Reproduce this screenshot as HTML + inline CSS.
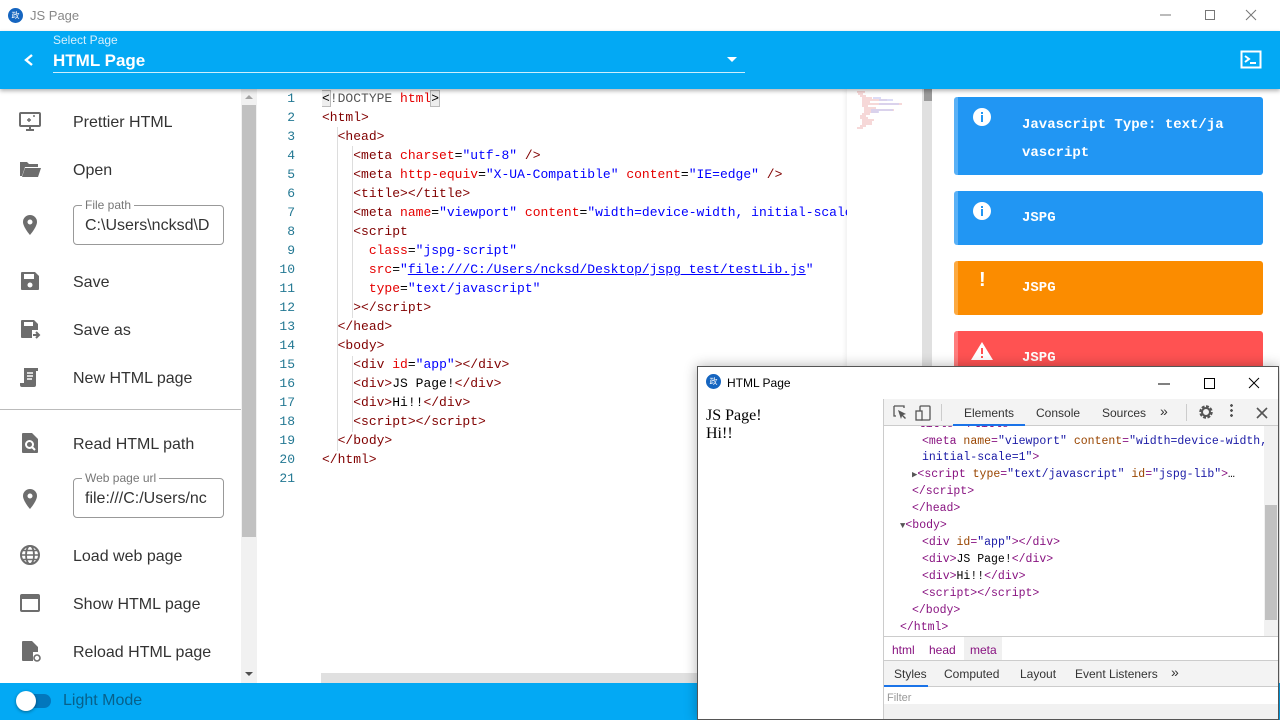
<!DOCTYPE html>
<html><head><meta charset="utf-8">
<style>
*{box-sizing:border-box;margin:0;padding:0}
body{width:1280px;height:720px;overflow:hidden;position:relative;font-family:"Liberation Sans",Arial,sans-serif;background:#fff;}
.abs{position:absolute}
.mono{font-family:"Liberation Mono","DejaVu Sans Mono",monospace}
.item{position:absolute;left:0;width:241px;height:48px}
.item .ic{position:absolute;left:18px;top:12px;width:24px;height:24px}
.item .tx{position:absolute;left:73px;top:17px;font-size:16px;color:#333}
.fld{position:absolute;left:73px;width:151px;height:40px;border:1px solid #999;border-radius:4px}
.fld .lb{position:absolute;left:8px;top:-8px;background:#fff;padding:0 3px;font-size:12px;color:#777}
.fld .v{position:absolute;left:11px;top:11px;font-size:16px;color:#333;white-space:nowrap;overflow:hidden;width:138px}
.cl{position:absolute;left:0;height:19px;font-size:13px;line-height:19px;white-space:pre;color:#000}
.ln{position:absolute;width:40px;text-align:right;left:255px;font-size:13px;line-height:19px;color:#237893}
.t{color:#800000}.a{color:#e50000}.s{color:#0000ff}
.card{position:absolute;left:954px;width:309px;border-radius:3px;color:#fff;font-family:"Liberation Mono",monospace;font-weight:bold;font-size:14px;border-left:4px solid rgba(255,255,255,.25)}
.dl{position:absolute;font-size:11.5px;line-height:17px;white-space:pre;font-family:"Liberation Mono",monospace}
.tg{color:#881280}.at{color:#994500}.av{color:#1a1aa6}
</style></head><body>
<div class="abs" style="left:0;top:0;width:1280px;height:31px;background:#fff"></div>
<div class="abs" style="left:8px;top:8px;width:15px;height:15px;border-radius:50%;background:#1565c0;color:#fff;font-size:8px;line-height:15px;text-align:center">政</div>
<div class="abs" style="left:30px;top:8px;font-size:13px;color:#888">JS Page</div>
<svg class="abs" style="left:1150px;top:5px" width="120" height="20"><line x1="10" y1="10" x2="21" y2="10" stroke="#777"/><rect x="55.5" y="5.5" width="9" height="9" fill="none" stroke="#777"/><path d="M96 5L106 15M106 5L96 15" stroke="#777"/></svg>
<div class="abs" style="left:0;top:31px;width:1280px;height:58px;background:#03a9f4;box-shadow:0 2px 4px rgba(0,0,0,.3);z-index:2">
<svg class="abs" style="left:22px;top:22px" width="14" height="14"><path d="M10 2L4 7L10 12" stroke="#fff" stroke-width="2.4" fill="none"/></svg>
<div class="abs" style="left:53px;top:2px;font-size:12px;color:#d6f0fd">Select Page</div>
<div class="abs" style="left:53px;top:20px;font-size:17px;font-weight:bold;color:#fff">HTML Page</div>
<div class="abs" style="left:53px;top:41px;width:692px;height:1px;background:#cdeefd"></div>
<svg class="abs" style="left:726px;top:25px" width="12" height="8"><path d="M1 1L6 6L11 1Z" fill="#fff"/></svg>
<svg class="abs" style="left:1240px;top:19px" width="22" height="20"><rect x="1.5" y="1.5" width="19" height="16" fill="none" stroke="#fff" stroke-width="2"/><path d="M5 6L9 9L5 12" stroke="#fff" stroke-width="2" fill="none"/><line x1="10" y1="13" x2="16" y2="13" stroke="#fff" stroke-width="2"/></svg>
</div>
<div class="abs" style="left:0;top:89px;width:241px;height:594px;background:#fff">
<div class="item" style="top:8px"><svg class="ic" viewBox="0 0 24 24"><rect x="2" y="4" width="20" height="13" rx="1" fill="none" stroke="#6d6d6d" stroke-width="2"/><path d="M8 21h8M12 17v4" stroke="#6d6d6d" stroke-width="2"/><path d="M9 11h4M11 9v4M15 7h2" stroke="#6d6d6d" stroke-width="1.4"/></svg><div class="tx">Prettier HTML</div></div>
<div class="item" style="top:56px"><svg class="ic" viewBox="0 0 24 24"><path d="M2 5h7l2 2h9v3H7L4 19H2z" fill="#6d6d6d"/><path d="M7 11h16l-3 9H4z" fill="#6d6d6d"/></svg><div class="tx">Open</div></div>
<div class="item" style="top:112px"><svg class="ic" viewBox="0 0 24 24"><path d="M12 2a7 7 0 0 0-7 7c0 5 7 13 7 13s7-8 7-13a7 7 0 0 0-7-7zm0 9.5a2.5 2.5 0 1 1 0-5 2.5 2.5 0 0 1 0 5z" fill="#6d6d6d"/></svg></div>
<div class="fld" style="top:116px"><div class="lb">File path</div><div class="v">C:\Users\ncksd\D</div></div>
<div class="item" style="top:168px"><svg class="ic" viewBox="0 0 24 24"><path d="M4 3h13l4 4v13a1 1 0 0 1-1 1H4a1 1 0 0 1-1-1V4a1 1 0 0 1 1-1z" fill="#6d6d6d"/><rect x="6" y="5" width="10" height="5" fill="#fff"/><circle cx="12" cy="16" r="2.5" fill="#fff"/></svg><div class="tx">Save</div></div>
<div class="item" style="top:216px"><svg class="ic" viewBox="0 0 24 24"><path d="M4 3h12l4 4v6h-6v8H4a1 1 0 0 1-1-1V4a1 1 0 0 1 1-1z" fill="#6d6d6d"/><rect x="6" y="5" width="9" height="4" fill="#fff"/><path d="M15 18h5M18 15l3 3-3 3" stroke="#6d6d6d" stroke-width="2" fill="none"/></svg><div class="tx">Save as</div></div>
<div class="item" style="top:264px"><svg class="ic" viewBox="0 0 24 24"><path d="M6 3h14v3h-2v14a2 2 0 0 1-2 2H4a2 2 0 0 1-2-2v-2h4z" fill="#6d6d6d"/><path d="M9 8h6M9 11h6M9 14h5" stroke="#fff" stroke-width="1.5"/></svg><div class="tx">New HTML page</div></div>
<div class="abs" style="left:0;top:320px;width:241px;height:1px;background:#bbb"></div>
<div class="item" style="top:330px"><svg class="ic" viewBox="0 0 24 24"><path d="M5 2h9l6 6v13a1 1 0 0 1-1 1H5a1 1 0 0 1-1-1V3a1 1 0 0 1 1-1z" fill="#6d6d6d"/><circle cx="11.5" cy="13.5" r="3.5" fill="none" stroke="#fff" stroke-width="2"/><path d="M14 16l3 3" stroke="#fff" stroke-width="2"/></svg><div class="tx">Read HTML path</div></div>
<div class="item" style="top:386px"><svg class="ic" viewBox="0 0 24 24"><path d="M12 2a7 7 0 0 0-7 7c0 5 7 13 7 13s7-8 7-13a7 7 0 0 0-7-7zm0 9.5a2.5 2.5 0 1 1 0-5 2.5 2.5 0 0 1 0 5z" fill="#6d6d6d"/></svg></div>
<div class="fld" style="top:389px"><div class="lb">Web page url</div><div class="v">file:///C:/Users/nc</div></div>
<div class="item" style="top:442px"><svg class="ic" viewBox="0 0 24 24"><circle cx="12" cy="12" r="9" fill="none" stroke="#6d6d6d" stroke-width="2"/><ellipse cx="12" cy="12" rx="4" ry="9" fill="none" stroke="#6d6d6d" stroke-width="1.8"/><path d="M3 12h18M4.5 7.5h15M4.5 16.5h15" stroke="#6d6d6d" stroke-width="1.6"/></svg><div class="tx">Load web page</div></div>
<div class="item" style="top:490px"><svg class="ic" viewBox="0 0 24 24"><rect x="3" y="4" width="18" height="16" rx="1" fill="none" stroke="#6d6d6d" stroke-width="2"/><rect x="3" y="4" width="18" height="4" fill="#6d6d6d"/></svg><div class="tx">Show HTML page</div></div>
<div class="item" style="top:538px"><svg class="ic" viewBox="0 0 24 24"><path d="M5 2h9l6 6v5h-5v9H5a1 1 0 0 1-1-1V3a1 1 0 0 1 1-1z" fill="#6d6d6d"/><circle cx="19" cy="19" r="3" fill="none" stroke="#6d6d6d" stroke-width="1.6"/></svg><div class="tx">Reload HTML page</div></div>
</div>
<div class="abs" style="left:241px;top:89px;width:16px;height:594px;background:#f1f1f1"></div>
<div class="abs" style="left:242px;top:105px;width:14px;height:432px;background:#c1c1c1"></div>
<svg class="abs" style="left:243px;top:93px" width="12" height="8"><path d="M2 6L6 2L10 6Z" fill="#a3a3a3"/></svg>
<svg class="abs" style="left:243px;top:670px" width="12" height="8"><path d="M2 2L6 6L10 2Z" fill="#505050"/></svg>
<div class="mono">
<div class="ln" style="top:89px">1</div><div class="ln" style="top:108px">2</div><div class="ln" style="top:127px">3</div><div class="ln" style="top:146px">4</div><div class="ln" style="top:165px">5</div><div class="ln" style="top:184px">6</div><div class="ln" style="top:203px">7</div><div class="ln" style="top:222px">8</div><div class="ln" style="top:241px">9</div><div class="ln" style="top:260px">10</div><div class="ln" style="top:279px">11</div><div class="ln" style="top:298px">12</div><div class="ln" style="top:317px">13</div><div class="ln" style="top:336px">14</div><div class="ln" style="top:355px">15</div><div class="ln" style="top:374px">16</div><div class="ln" style="top:393px">17</div><div class="ln" style="top:412px">18</div><div class="ln" style="top:431px">19</div><div class="ln" style="top:450px">20</div><div class="ln" style="top:469px">21</div>
</div>
<div class="abs" style="left:322px;top:89px;width:525px;height:400px;overflow:hidden" >
<div class="abs" style="left:15px;top:38px;width:1px;border-left:1px solid #ddd;height:324px"></div>
<div class="abs" style="left:30px;top:57px;width:1px;height:172px;border-left:1px solid #ddd"></div>
<div class="abs" style="left:30px;top:267px;width:1px;height:76px;border-left:1px solid #ddd"></div>
<div class="mono">
<div class="cl" style="top:0"><span style="outline:1px solid #bbb;background:#eee">&lt;</span><span style="color:#555">!DOCTYPE </span><span class="a">html</span><span style="outline:1px solid #bbb;background:#eee">&gt;</span></div>
<div class="cl" style="top:19px"><span class="t">&lt;html&gt;</span></div>
<div class="cl" style="top:38px">  <span class="t">&lt;head&gt;</span></div>
<div class="cl" style="top:57px">    <span class="t">&lt;meta</span> <span class="a">charset</span>=<span class="s">"utf-8"</span> <span class="t">/&gt;</span></div>
<div class="cl" style="top:76px">    <span class="t">&lt;meta</span> <span class="a">http-equiv</span>=<span class="s">"X-UA-Compatible"</span> <span class="a">content</span>=<span class="s">"IE=edge"</span> <span class="t">/&gt;</span></div>
<div class="cl" style="top:95px">    <span class="t">&lt;title&gt;&lt;/title&gt;</span></div>
<div class="cl" style="top:114px">    <span class="t">&lt;meta</span> <span class="a">name</span>=<span class="s">"viewport"</span> <span class="a">content</span>=<span class="s">"width=device-width, initial-scale=1"</span></div>
<div class="cl" style="top:133px">    <span class="t">&lt;script</span></div>
<div class="cl" style="top:152px">      <span class="a">class</span>=<span class="s">"jspg-script"</span></div>
<div class="cl" style="top:171px">      <span class="a">src</span>=<span class="s">"<u>file:///C:/Users/ncksd/Desktop/jspg_test/testLib.js</u>"</span></div>
<div class="cl" style="top:190px">      <span class="a">type</span>=<span class="s">"text/javascript"</span></div>
<div class="cl" style="top:209px">    <span class="t">&gt;&lt;/script&gt;</span></div>
<div class="cl" style="top:228px">  <span class="t">&lt;/head&gt;</span></div>
<div class="cl" style="top:247px">  <span class="t">&lt;body&gt;</span></div>
<div class="cl" style="top:266px">    <span class="t">&lt;div</span> <span class="a">id</span>=<span class="s">"app"</span><span class="t">&gt;&lt;/div&gt;</span></div>
<div class="cl" style="top:285px">    <span class="t">&lt;div&gt;</span>JS Page!<span class="t">&lt;/div&gt;</span></div>
<div class="cl" style="top:304px">    <span class="t">&lt;div&gt;</span>Hi!!<span class="t">&lt;/div&gt;</span></div>
<div class="cl" style="top:323px">    <span class="t">&lt;script&gt;&lt;/script&gt;</span></div>
<div class="cl" style="top:342px">  <span class="t">&lt;/body&gt;</span></div>
<div class="cl" style="top:361px"><span class="t">&lt;/html&gt;</span></div>
</div></div>
<div class="abs" style="left:847px;top:89px;width:75px;height:594px;background:#fff;box-shadow:-2px 0 4px rgba(0,0,0,.06)"></div>
<svg class="abs" style="left:855px;top:90px" width="70" height="40"><g stroke-width="0.8" opacity="0.7"><path d="M2 2h8M3 4h5M5 6h6M7 8h10M7 10h25M7 12h8M7 14h40M7 16h6M9 18h12M9 20h30M9 22h14M7 24h8M5 26h6M5 28h8M7 30h12M7 32h10M7 34h10M5 36h6M2 38h6" stroke="#e06c6c"/><path d="M18 8h8M24 10h14M24 14h20M16 20h22M16 22h8" stroke="#7b7be0"/></g></svg>
<div class="abs" style="left:922px;top:89px;width:10px;height:594px;background:#e0e0e0"></div>
<div class="abs" style="left:924px;top:89px;width:8px;height:12px;background:#9a9a9a"></div>
<div class="abs" style="left:321px;top:673px;width:380px;height:10px;background:#e0e0e0"></div>
<div class="abs" style="left:932px;top:89px;width:348px;height:594px;background:#fff"></div>
<div class="card" style="top:97px;height:78px;background:#2196f3"><svg class="abs" style="left:14px;top:10px" width="20" height="20"><circle cx="10" cy="10" r="9" fill="#fff"/><rect x="9" y="8" width="2" height="7" fill="#2196f3"/><rect x="9" y="5" width="2" height="2" fill="#2196f3"/></svg><div class="abs" style="left:64px;top:14px;line-height:28px;width:230px">Javascript Type: text/ja<br>vascript</div></div>
<div class="card" style="top:191px;height:54px;background:#2196f3"><svg class="abs" style="left:14px;top:10px" width="20" height="20"><circle cx="10" cy="10" r="9" fill="#fff"/><rect x="9" y="8" width="2" height="7" fill="#2196f3"/><rect x="9" y="5" width="2" height="2" fill="#2196f3"/></svg><div class="abs" style="left:64px;top:19px">JSPG</div></div>
<div class="card" style="top:261px;height:54px;background:#fb8c00"><div class="abs" style="left:21px;top:8px;font-family:'Liberation Sans';font-size:20px">!</div><div class="abs" style="left:64px;top:19px">JSPG</div></div>
<div class="card" style="top:331px;height:40px;background:#ff5252;border-radius:3px 3px 0 0"><svg class="abs" style="left:12px;top:10px" width="24" height="20"><path d="M12 1L23 19H1Z" fill="#fff"/><rect x="11" y="7" width="2" height="6" fill="#ff5252"/><rect x="11" y="15" width="2" height="2" fill="#ff5252"/></svg><div class="abs" style="left:64px;top:19px">JSPG</div></div>
<div class="abs" style="left:0;top:683px;width:1280px;height:37px;background:#03a9f4"></div>
<div class="abs" style="left:18px;top:694px;width:33px;height:14px;border-radius:7px;background:#0277bd"></div>
<div class="abs" style="left:16px;top:691px;width:20px;height:20px;border-radius:50%;background:#fff;box-shadow:0 1px 3px rgba(0,0,0,.4)"></div>
<div class="abs" style="left:63px;top:692px;font-size:16px;color:#08608a">Light Mode</div>
<div class="abs" style="left:697px;top:366px;width:582px;height:354px;background:#fff;border:1px solid #555;box-shadow:0 0 12px rgba(0,0,0,.3);overflow:hidden">
<div class="abs" style="left:8px;top:7px;width:15px;height:15px;border-radius:50%;background:#1565c0;color:#fff;font-size:8px;line-height:15px;text-align:center">政</div>
<div class="abs" style="left:29px;top:9px;font-size:12px;color:#000">HTML Page</div>
<svg class="abs" style="left:450px;top:6px" width="130" height="20"><line x1="10" y1="11" x2="22" y2="11" stroke="#000"/><rect x="56.5" y="5.5" width="10" height="10" fill="none" stroke="#000"/><path d="M101 5L111 15M111 5L101 15" stroke="#000"/></svg>
<div class="abs" style="left:8px;top:40px;font-family:'Liberation Serif',serif;font-size:16px;line-height:18px;color:#000">JS Page!<br>Hi!!</div>
<div class="abs" style="left:185px;top:32px;width:396px;height:322px;background:#fff;border-left:1px solid #ccc">
 <div class="abs" style="left:0;top:0;width:396px;height:27px;background:#f3f3f3;border-bottom:1px solid #ccc"></div>
 <svg class="abs" style="left:8px;top:5px" width="40" height="18"><path d="M2 2h10v2M2 2v10h2" stroke="#555" fill="none" stroke-width="1.3"/><path d="M6 6l8 4-3 1 3 3-1 1-3-3-1 3z" fill="#555"/><rect x="28" y="2" width="10" height="14" rx="1" fill="none" stroke="#555" stroke-width="1.3"/><rect x="24" y="7" width="6" height="9" fill="#f3f3f3" stroke="#555" stroke-width="1.3"/></svg>
 <div class="abs" style="left:57px;top:5px;width:1px;height:17px;background:#ccc"></div>
 <div class="abs" style="left:80px;top:7px;font-size:12px;color:#333">Elements</div>
 <div class="abs" style="left:69px;top:25px;width:72px;height:2px;background:#1a73e8"></div>
 <div class="abs" style="left:152px;top:7px;font-size:12px;color:#333">Console</div>
 <div class="abs" style="left:218px;top:7px;font-size:12px;color:#333">Sources</div>
 <div class="abs" style="left:276px;top:4px;font-size:14px;color:#333">»</div>
 <div class="abs" style="left:302px;top:5px;width:1px;height:17px;background:#ccc"></div>
 <svg class="abs" style="left:314px;top:5px" width="16" height="16"><circle cx="8" cy="8" r="5" fill="none" stroke="#555" stroke-width="3.5" stroke-dasharray="2.6 1.3"/><circle cx="8" cy="8" r="4" fill="none" stroke="#555" stroke-width="2"/></svg>
 <div class="abs" style="left:346px;top:4px;width:3px;height:15px;background:radial-gradient(circle,#555 1.3px,transparent 1.5px) 0 0/3px 5px"></div>
 <svg class="abs" style="left:372px;top:8px" width="12" height="12"><path d="M1 1L11 11M11 1L1 11" stroke="#555" stroke-width="1.6"/></svg>
 <div class="abs" style="left:0;top:27px;width:396px;height:210px;overflow:hidden">
  <div class="dl" style="left:28px;top:-10px"><span class="tg">&lt;title&gt;&lt;/title&gt;</span></div>
  <div class="dl" style="left:38px;top:7px"><span class="tg">&lt;meta</span> <span class="at">name</span><span class="tg">=</span><span class="av">"viewport"</span> <span class="at">content</span><span class="tg">=</span><span class="av">"width=device-width,</span></div>
  <div class="dl" style="left:38px;top:23px"><span class="av">initial-scale=1"</span><span class="tg">&gt;</span></div>
  <div class="dl" style="left:28px;top:40px"><span style="font-size:9px;color:#555">▶</span><span class="tg">&lt;script</span> <span class="at">type</span><span class="tg">=</span><span class="av">"text/javascript"</span> <span class="at">id</span><span class="tg">=</span><span class="av">"jspg-lib"</span><span class="tg">&gt;</span>…</div>
  <div class="dl" style="left:28px;top:57px"><span class="tg">&lt;/script&gt;</span></div>
  <div class="dl" style="left:28px;top:74px"><span class="tg">&lt;/head&gt;</span></div>
  <div class="dl" style="left:16px;top:91px"><span style="font-size:9px;color:#555">▼</span><span class="tg">&lt;body&gt;</span></div>
  <div class="dl" style="left:38px;top:108px"><span class="tg">&lt;div</span> <span class="at">id</span><span class="tg">=</span><span class="av">"app"</span><span class="tg">&gt;&lt;/div&gt;</span></div>
  <div class="dl" style="left:38px;top:125px"><span class="tg">&lt;div&gt;</span>JS Page!<span class="tg">&lt;/div&gt;</span></div>
  <div class="dl" style="left:38px;top:142px"><span class="tg">&lt;div&gt;</span>Hi!!<span class="tg">&lt;/div&gt;</span></div>
  <div class="dl" style="left:38px;top:159px"><span class="tg">&lt;script&gt;&lt;/script&gt;</span></div>
  <div class="dl" style="left:28px;top:176px"><span class="tg">&lt;/body&gt;</span></div>
  <div class="dl" style="left:16px;top:193px"><span class="tg">&lt;/html&gt;</span></div>
  <div class="abs" style="left:380px;top:0;width:15px;height:210px;background:#f1f1f1"></div>
  <div class="abs" style="left:381px;top:79px;width:12px;height:115px;background:#c1c1c1"></div>
 </div>
 <div class="abs" style="left:0;top:237px;width:396px;height:1px;background:#ccc"></div>
 <div class="abs" style="left:8px;top:244px;font-size:12px;color:#881280">html</div>
 <div class="abs" style="left:45px;top:244px;font-size:12px;color:#881280">head</div>
 <div class="abs" style="left:80px;top:238px;width:38px;height:23px;background:#f0f0f0"></div>
 <div class="abs" style="left:86px;top:244px;font-size:12px;color:#881280">meta</div>
 <div class="abs" style="left:0;top:261px;width:396px;height:27px;background:#f3f3f3;border-top:1px solid #ccc;border-bottom:1px solid #ccc"></div>
 <div class="abs" style="left:10px;top:268px;font-size:12px;color:#333">Styles</div>
 <div class="abs" style="left:0;top:286px;width:44px;height:2px;background:#1a73e8"></div>
 <div class="abs" style="left:60px;top:268px;font-size:12px;color:#333">Computed</div>
 <div class="abs" style="left:136px;top:268px;font-size:12px;color:#333">Layout</div>
 <div class="abs" style="left:191px;top:268px;font-size:12px;color:#333">Event Listeners</div>
 <div class="abs" style="left:287px;top:265px;font-size:14px;color:#333">»</div>
 <div class="abs" style="left:3px;top:293px;width:240px;height:12px;background:#fff;font-size:11px;color:#999;overflow:hidden">Filter</div>
 <div class="abs" style="left:0;top:305px;width:396px;height:17px;background:#f1f1f1"></div>
</div>
</div>
</body></html>
